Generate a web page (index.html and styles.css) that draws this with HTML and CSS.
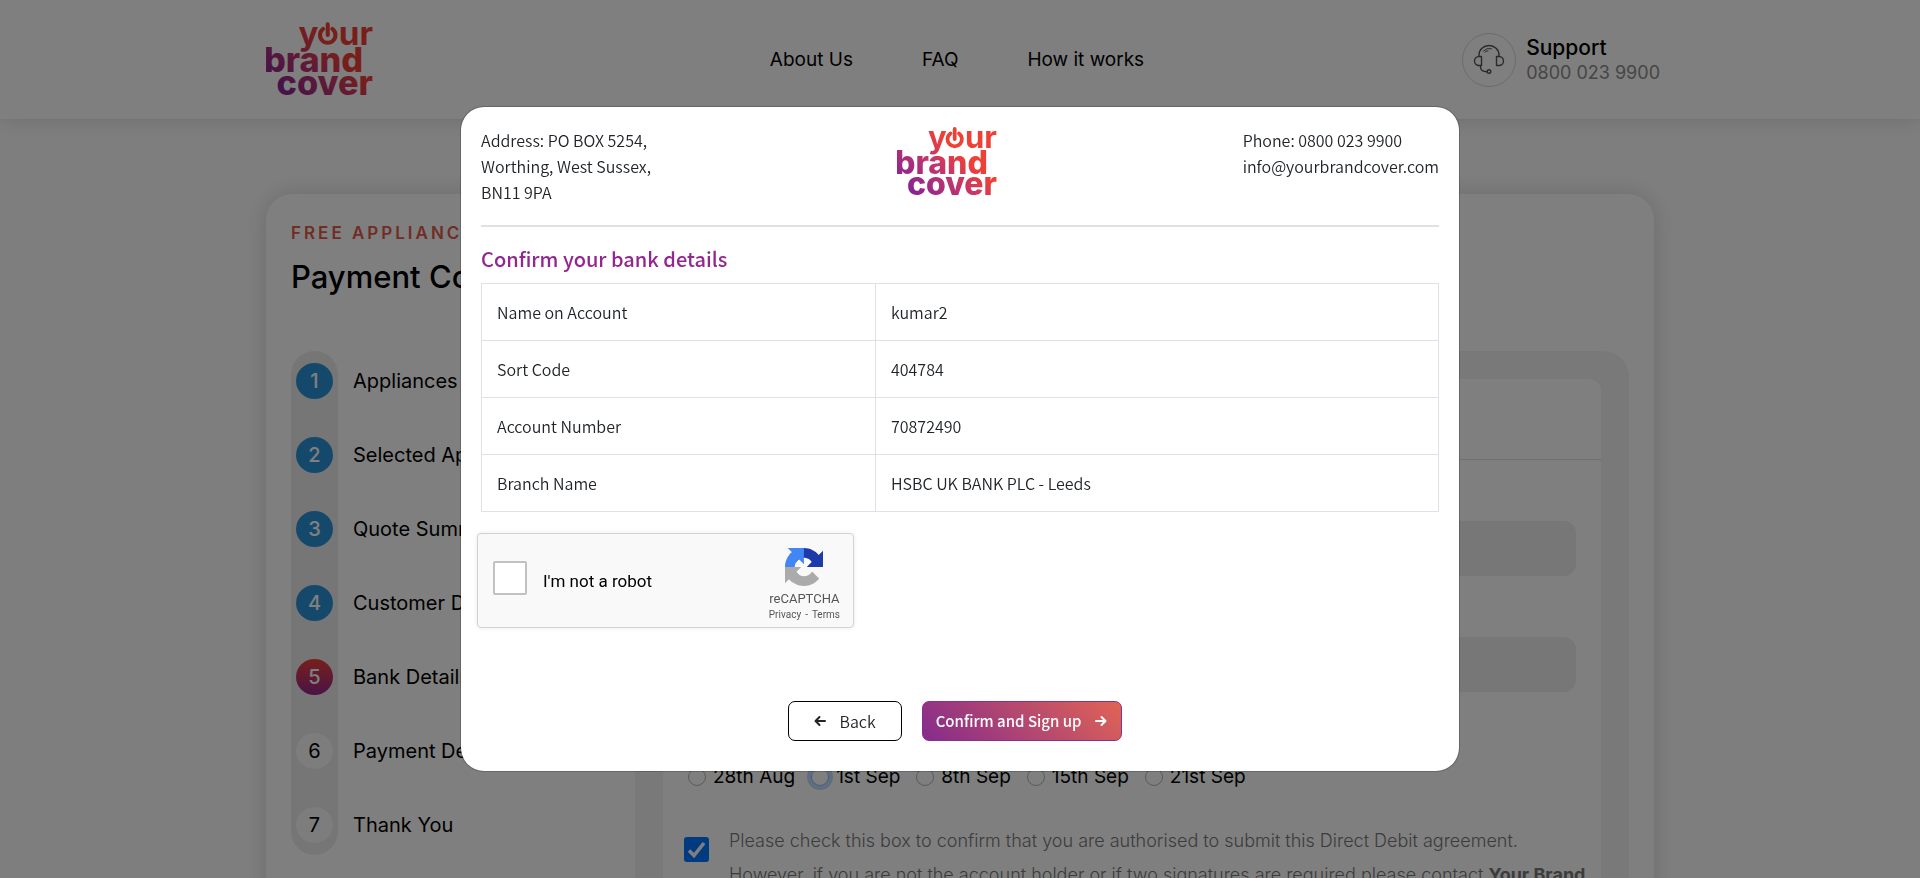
FILE: index.html
```html
<!DOCTYPE html>
<html lang="en">
<head>
<meta charset="utf-8">
<meta name="viewport" content="width=device-width, initial-scale=1">
<title>Your Brand Cover - Payment Confirmation</title>
<link rel="stylesheet" href="styles.css">
</head>
<body>
<svg class="defs" width="0" height="0" aria-hidden="true">
  <defs>
    <linearGradient id="brand-gradient" gradientUnits="userSpaceOnUse" x1="20" y1="66" x2="66" y2="14">
      <stop offset="0" stop-color="#8b2690"/>
      <stop offset="0.5" stop-color="#c4366a"/>
      <stop offset="0.85" stop-color="#ef4036"/>
    </linearGradient>
    <symbol id="logo" viewBox="0 0 100 70">
      <g class="logo-words" fill="url(#brand-gradient)">
        <text class="logo-top" x="100" y="21" text-anchor="end">y<tspan fill="none">o</tspan>ur</text>
        <text x="-2" y="47">brand</text>
        <text x="100" y="68" text-anchor="end">cover</text>
      </g>
      <path d="M53.4 6.400a7.200 7.200 0 1 0 8.600 0M57.700 2v10" fill="none" stroke="#ef4036" stroke-width="3.800" stroke-linecap="round"/>
    </symbol>
  </defs>
</svg>

<header class="site-header">
  <div class="site-header-inner">
    <a class="brand" href="#" aria-label="Your Brand Cover"><svg class="brand-logo"><use href="#logo"/></svg></a>
    <nav class="site-nav">
      <a href="#">About Us</a>
      <a href="#">FAQ</a>
      <a href="#">How it works</a>
    </nav>
    <div class="support">
      <span class="support-icon">
        <svg viewBox="0 0 32 32" fill="none" stroke="#555" stroke-width="1.4" stroke-linecap="round" stroke-linejoin="round">
          <path d="M6 12v-1a10 9.500 0 0 1 20 0v1"/>
          <path d="M8.500 12.500v9H6a4.500 4.500 0 0 1 0-9zM23.500 12.500v9H26a4.500 4.500 0 0 0 0-9z"/>
          <path d="M7.500 21.500v1.500c0 3 2.500 4.700 6.500 4.700"/>
          <circle cx="16" cy="27.500" r="1.800"/>
          <path d="M10.500 7a7.500 7 0 0 1 8-2.300M12 8a6 6 0 0 1 3-1.200" stroke-width="1"/>
        </svg>
      </span>
      <div>
        <div class="support-title">Support</div>
        <div class="support-phone">0800 023 9900</div>
      </div>
    </div>
  </div>
</header>

<main class="page">
  <section class="card">
    <p class="eyebrow">FREE APPLIANCE COVER</p>
    <h1 class="page-title">Payment Confirmation</h1>
    <div class="card-columns">
      <ol class="steps">
        <li class="step done"><span class="step-dot">1</span>Appliances</li>
        <li class="step done"><span class="step-dot">2</span>Selected Appliances</li>
        <li class="step done"><span class="step-dot">3</span>Quote Summary</li>
        <li class="step done"><span class="step-dot">4</span>Customer Details</li>
        <li class="step current"><span class="step-dot">5</span>Bank Details</li>
        <li class="step"><span class="step-dot">6</span>Payment Details</li>
        <li class="step"><span class="step-dot">7</span>Thank You</li>
      </ol>
      <div class="panel">
        <form class="panel-body">
          <div class="panel-head"></div>
          <div class="fields">
            <input class="field" type="text" aria-label="Sort Code">
            <input class="field" type="text" aria-label="Account Number">
          </div>
          <div class="dates">
            <label class="date"><input type="radio" name="date">28th Aug</label>
            <label class="date"><input class="focused" type="radio" name="date">1st Sep</label>
            <label class="date"><input type="radio" name="date">8th Sep</label>
            <label class="date"><input type="radio" name="date">15th Sep</label>
            <label class="date"><input type="radio" name="date">21st Sep</label>
          </div>
          <div class="agree">
            <input class="agree-box" type="checkbox" id="agree" checked>
            <label for="agree">Please check this box to confirm that you are authorised to submit this Direct Debit agreement.<br>However, if you are not the account holder or if two signatures are required please contact <b>Your Brand</b></label>
          </div>
        </form>
      </div>
    </div>
  </section>
</main>

<div class="overlay">
  <div class="modal" role="dialog" aria-modal="true" aria-labelledby="modal-title">
    <div class="modal-head">
      <address class="modal-text">Address: PO BOX 5254,<br>Worthing, West Sussex,<br>BN11 9PA</address>
      <svg class="modal-logo" role="img" aria-label="Your Brand Cover"><use href="#logo"/></svg>
      <div class="modal-text modal-contact">Phone: 0800 023 9900<br>info@yourbrandcover.com</div>
    </div>
    <h2 class="modal-title" id="modal-title">Confirm your bank details</h2>
    <table class="details">
      <tbody>
        <tr><th scope="row">Name on Account</th><td>kumar2</td></tr>
        <tr><th scope="row">Sort Code</th><td>404784</td></tr>
        <tr><th scope="row">Account Number</th><td>70872490</td></tr>
        <tr><th scope="row">Branch Name</th><td>HSBC UK BANK PLC - Leeds</td></tr>
      </tbody>
    </table>
    <div class="captcha">
      <label class="captcha-label"><input class="captcha-box" type="checkbox">I'm not a robot</label>
      <div class="captcha-brand">
        <svg class="captcha-icon" viewBox="0 0 64 64">
          <path fill="#1c3aa9" d="M64 31.955l-.033-1.370V4.687l-7.160 7.160C50.948 4.674 42.033.093 32.050.093c-10.400 0-19.622 4.960-25.458 12.640l11.736 11.860a15.550 15.550 0 0 1 4.754-5.334c2.050-1.600 4.952-2.906 8.968-2.906.485 0 .860.057 1.135.163 4.976.393 9.288 3.140 11.828 7.124l-8.307 8.307L64 31.953"/>
          <path fill="#4285f4" d="M31.862.094l-1.370.033H4.594l7.160 7.160C4.580 13.147 0 22.060 0 32.046c0 10.400 4.960 19.622 12.640 25.458L24.500 45.768a15.550 15.550 0 0 1-5.334-4.754c-1.600-2.050-2.906-4.952-2.906-8.968 0-.485.057-.860.163-1.135.393-4.976 3.140-9.288 7.124-11.828l8.307 8.307L31.860.095"/>
          <path fill="#ababab" d="M.001 32.045l.033 1.370v25.898l7.160-7.160c5.860 7.173 14.774 11.754 24.760 11.754 10.400 0 19.622-4.960 25.458-12.640l-11.736-11.860a15.550 15.550 0 0 1-4.754 5.334c-2.050 1.600-4.952 2.906-8.968 2.906-.485 0-.860-.057-1.135-.163-4.976-.393-9.288-3.140-11.828-7.124l8.307-8.307c-10.522.040-22.400.066-27.295-.005"/>
        </svg>
        <div class="captcha-name">reCAPTCHA</div>
        <div class="captcha-links"><a href="#">Privacy</a><span class="dash">-</span><a href="#">Terms</a></div>
      </div>
    </div>
    <div class="actions">
      <button class="btn btn-back" type="button">
        <svg class="arrow" viewBox="0 0 12 12"><path d="M11 6H2M5.500 2L1.500 6l4 4"/></svg>Back
      </button>
      <button class="btn btn-confirm" type="button">Confirm and Sign up
        <svg class="arrow" viewBox="0 0 12 12"><path d="M1 6h9M6.500 2l4 4-4 4"/></svg>
      </button>
    </div>
  </div>
</div>
</body>
</html>
```
FILE: styles.css
```css
*,
*::before,
*::after {
  box-sizing: border-box;
}

body {
  margin: 0;
  height: 100vh;
  overflow: hidden;
  background: #fdfdfd;
  color: #000;
  font: 400 20px/24px Inter, sans-serif;
}

a {
  color: inherit;
  text-decoration: none;
}

input {
  appearance: none;
  margin: 0;
}

.defs {
  position: absolute;
}

.logo-words {
  font: 800 32px Inter, sans-serif;
}

.logo-top {
  font-size: 31px;
  font-weight: 700;
}

/* Header */
.site-header {
  position: relative;
  background: #fff;
  box-shadow: 0 0 20px rgba(0, 0, 0, 0.15);
}

.site-header-inner {
  display: grid;
  grid-template-columns: 1fr auto 1fr;
  align-items: center;
  max-width: 1400px;
  height: 119px;
  margin: 0 auto;
  padding-left: 6px;
}

.brand-logo {
  display: block;
  width: 107px;
  height: 75px;
}

.site-nav {
  display: flex;
  gap: 69px;
  padding-right: 12px;
  font-size: 19px;
}

.support {
  display: flex;
  align-items: center;
  justify-content: flex-end;
  gap: 10px;
}

.support-icon {
  display: grid;
  place-items: center;
  width: 54px;
  height: 54px;
  border: 1px solid #d8d8d8;
  border-radius: 50%;
}

.support-icon svg {
  width: 32px;
  height: 32px;
}

.support-title {
  padding-top: 2px;
  font-size: 21px;
  font-weight: 500;
}

.support-phone {
  color: #8c8c8c;
  font-size: 18px;
  line-height: 26px;
}

/* Page card */
.page {
  max-width: 1388px;
  margin: 75px auto 0;
}

.card {
  padding: 27px 25px 60px;
  background: #fff;
  border-radius: 26px;
  box-shadow: 0 0 24px rgba(0, 0, 0, 0.15);
}

.eyebrow {
  margin: 0;
  color: #e15b4c;
  font-size: 17px;
  font-weight: 600;
  letter-spacing: 3px;
}

.page-title {
  margin: 11px 0 54px;
  font-size: 31px;
  font-weight: 500;
  line-height: 41px;
}

.card-columns {
  display: grid;
  grid-template-columns: 344px 1fr;
  align-items: start;
}

.steps {
  display: flex;
  flex-direction: column;
  gap: 38px;
  position: relative;
  margin: 0;
  padding: 12px 0 12px 5px;
  list-style: none;
  white-space: nowrap;
}

.steps::before {
  content: "";
  position: absolute;
  inset: 0 auto 0 0;
  width: 47px;
  background: #ececec;
  border-radius: 24px;
}

.step {
  display: flex;
  align-items: center;
  gap: 20px;
  position: relative;
}

.step-dot {
  display: grid;
  place-items: center;
  width: 37px;
  height: 36px;
  background: #fafafa;
  border-radius: 50%;
}

.done .step-dot {
  background: #2a93d8;
  color: #fff;
  font-weight: 500;
}

.current .step-dot {
  background: linear-gradient(#ef4036, #93278f);
  color: #fff;
  font-weight: 500;
}

.panel {
  padding: 28px;
  background: #f3f3f3;
  border-radius: 26px;
}

.panel-body {
  background: #fff;
  border-radius: 12px;
}

.panel-head {
  height: 81px;
  border-bottom: 1px solid #e0e0e0;
}

.fields {
  display: grid;
  gap: 61px;
  padding: 61px 25px 0;
}

.field {
  width: 100%;
  height: 55px;
  background: #efefef;
  border: 0;
  border-radius: 12px;
}

.dates {
  display: flex;
  gap: 16px;
  padding: 73px 25px 0;
  font-size: 19px;
}

.date {
  display: flex;
  align-items: center;
  gap: 7px;
}

.date input {
  width: 18px;
  height: 18px;
  border: 1px solid #b4b4b4;
  border-radius: 50%;
}

.date .focused {
  border-color: #86b7fe;
  box-shadow: 0 0 0 4px rgba(13, 110, 253, 0.25);
}

.agree {
  display: flex;
  gap: 20px;
  padding: 35px 0 0 21px;
  color: #787878;
  font-size: 18px;
  font-weight: 300;
  line-height: 34px;
  white-space: nowrap;
}

.agree b {
  font-weight: 700;
}

.agree-box {
  width: 25px;
  height: 25px;
  margin-top: 13px;
  background: #0075ff url("data:image/svg+xml,%3Csvg xmlns='http://www.w3.org/2000/svg' viewBox='0 0 25 25'%3E%3Cpath d='M5 13.500l5 5L20 6' fill='none' stroke='white' stroke-width='3.600'/%3E%3C/svg%3E");
  border-radius: 3px;
}

/* Modal */
.overlay {
  position: fixed;
  inset: 0;
  display: grid;
  place-items: center;
  background: rgba(0, 0, 0, 0.5);
}

.modal {
  width: 1000px;
  max-width: 100%;
  padding: 20px 20px 30px;
  background: #fff;
  background-clip: padding-box;
  border: 1px solid rgba(0, 0, 0, 0.2);
  border-radius: 24px;
  color: #212529;
  font: 350 16px/26px "Noto Sans CJK SC", sans-serif;
}

.modal-head {
  display: grid;
  grid-template-columns: 1fr auto 1fr;
  padding-bottom: 20px;
  border-bottom: 2px solid #dfe2e2;
}

.modal-text {
  font-style: normal;
}

.modal-logo {
  width: 100px;
  height: 70px;
  margin-right: 26px;
}

.modal-contact {
  justify-self: end;
}

.modal-title {
  margin: 18px 0 10px;
  color: #93278f;
  font-size: 20px;
  font-weight: 500;
  line-height: 28px;
}

.details {
  width: 100%;
  border-collapse: collapse;
}

.details th,
.details td {
  height: 57px;
  padding: 0 15px;
  border: 1px solid #dee2e6;
  font-weight: 350;
  text-align: left;
}

.details th {
  width: 394px;
}

.captcha {
  display: flex;
  justify-content: space-between;
  width: 377px;
  height: 95px;
  margin: 21px 0 73px -4px;
  padding: 0 13px 0 15px;
  background: #f9f9f9;
  border: 1px solid #d3d3d3;
  border-radius: 4px;
  box-shadow: 0 0 5px rgba(0, 0, 0, 0.08);
  font-family: Roboto, sans-serif;
  font-weight: 400;
}

.captcha-label {
  display: flex;
  align-items: center;
  gap: 16px;
  color: #000;
  font-size: 17px;
}

.captcha-box {
  width: 34px;
  height: 34px;
  margin-bottom: 6px;
  background: #fff;
  border: 2px solid #c1c1c1;
  border-radius: 2px;
}

.captcha-brand {
  padding-top: 14px;
  color: #555;
  text-align: center;
}

.captcha-icon {
  display: block;
  width: 38px;
  height: 38px;
  margin: 0 auto;
}

.captcha-name {
  margin-top: 5px;
  font-size: 13px;
  line-height: 16px;
}

.captcha-links {
  font-size: 10px;
  line-height: 16px;
}

.dash {
  margin: 0 4px;
}

.actions {
  display: flex;
  justify-content: center;
  gap: 20px;
  padding-right: 10px;
}

.btn {
  display: flex;
  align-items: center;
  height: 40px;
  border-radius: 7px;
  font: inherit;
}

.btn-back {
  gap: 14px;
  padding: 0 25px;
  background: #fff;
  border: 1px solid #000;
  color: #212529;
}

.btn-confirm {
  gap: 14px;
  padding: 0 14px 0 13px;
  background: linear-gradient(45deg, #852b8c, #e06455);
  border: 1px solid #8a2f92;
  color: #fff;
  font-size: 15px;
  font-weight: 500;
}

.arrow {
  width: 12px;
  height: 12px;
  fill: none;
  stroke: currentColor;
  stroke-width: 2;
  stroke-linecap: round;
  stroke-linejoin: round;
}
```
